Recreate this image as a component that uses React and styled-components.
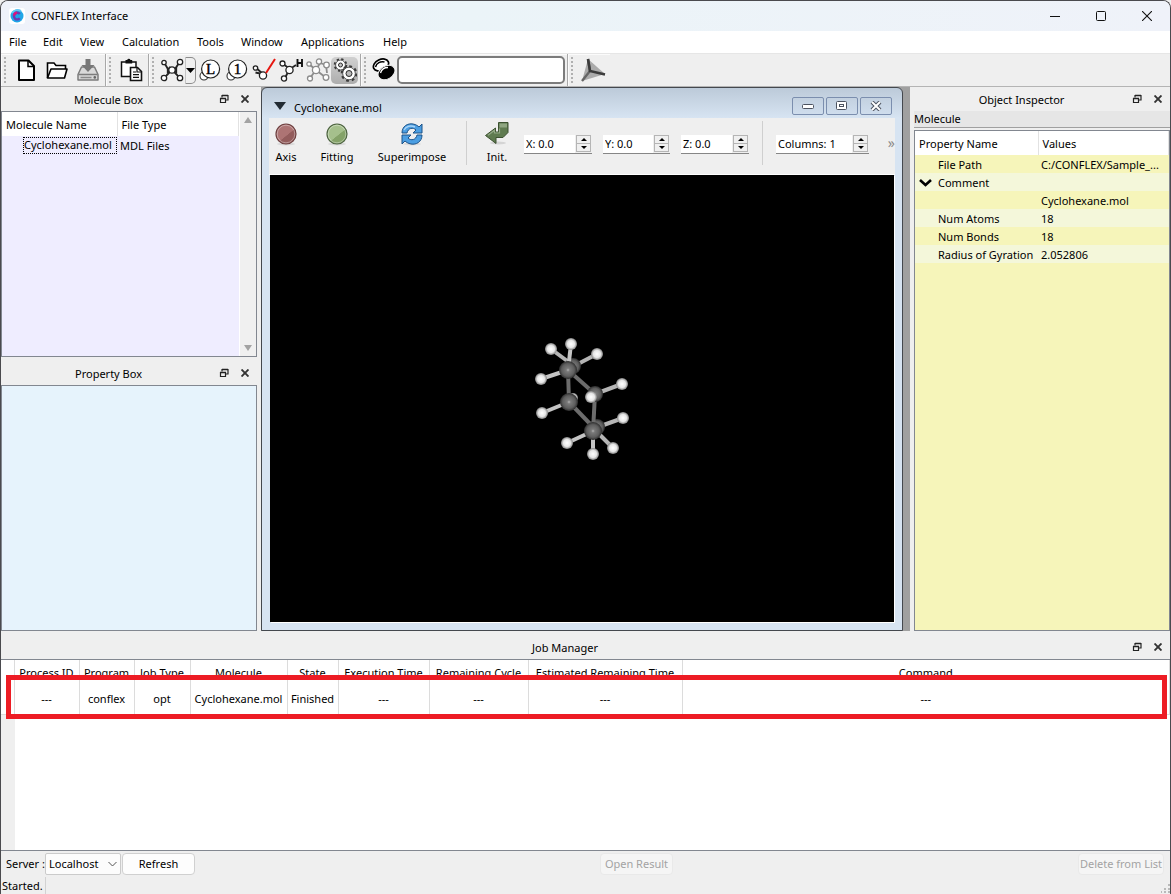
import React from "react";
import styled, { createGlobalStyle } from "styled-components";

const GlobalStyle = createGlobalStyle`
  *, *::before, *::after { box-sizing: border-box; }
  body {
    margin: 0;
    background: #efefef;
    color: #000;
    font-family: "Noto Sans", "Open Sans", sans-serif;
    font-size: 11px;
    line-height: 16px;
  }
  button, input, select { font: inherit; color: inherit; margin: 0; padding: 0; }
  button { border: 0; background: none; }
  svg { display: block; flex: none; }
  table { border-collapse: collapse; border-spacing: 0; }
  th { font-weight: 400; }
`;

/* ---------- application window ---------- */

const Window = styled.div`
  display: flex;
  flex-direction: column;
  min-height: 100vh;
  background: #efefef;
  border: 1px solid #4a4a4e;
  border-bottom: 0;
  border-radius: 8px 8px 0 0;
  overflow: hidden;
`;

const TitleBar = styled.header`
  display: flex;
  align-items: center;
  height: 30px;
  padding-left: 8px;
  background: linear-gradient(90deg, #eff2fa, #ebf4f8 40%, #eff2f9);
`;

const WindowTitle = styled.h1`
  flex: 1;
  margin: 0 0 0 6px;
  font-size: 11px;
  font-weight: 400;
`;

const CaptionButton = styled.button`
  display: grid;
  place-items: center;
  width: 46px;
  height: 30px;
`;

const MenuBar = styled.nav`
  display: flex;
  align-items: center;
  height: 22px;
  background: #fff;
`;

const MenuItem = styled.button`
  width: ${(p) => p.$width}px;
  height: 22px;
  padding-left: 8px;
  text-align: left;
  white-space: nowrap;
`;

/* ---------- main toolbar ---------- */

const ToolBars = styled.div`
  display: flex;
  height: 34px;
  border-top: 1px solid #e6e6e6;
  border-bottom: 1px solid #b4b4b4;
`;

const ToolGroup = styled.div`
  display: flex;
  align-items: center;
  padding: 0 2px 0 3px;
  border-right: ${(p) => (p.$last ? "0" : "1px solid #a8a8a8")};
  box-shadow: inset 1px 1px #fbfbfb;
`;

const Handle = styled.span`
  width: 3px;
  height: 27px;
  margin-right: 3px;
  background: repeating-linear-gradient(#b0b0b0 0 2px, transparent 2px 4px);
  border-right: 1px solid #efefef;
`;

const ToolButton = styled.button`
  display: grid;
  place-items: center;
  width: ${(p) => (p.$wide ? 31 : 27)}px;
  height: 27px;
  border-radius: 5px;
  background: ${(p) => (p.$pressed ? "linear-gradient(#d0d0d0, #adadad)" : "none")};
`;

const DropButton = styled.button`
  display: grid;
  place-items: center;
  width: 11px;
  height: 27px;
  border: 1px solid #8c8c8c;
  border-left-color: #c4c4c4;
  border-radius: 0 5px 5px 0;
`;

const SearchBox = styled.input`
  width: 168px;
  height: 28px;
  padding: 0 6px;
  border: 2px solid #7c7c7c;
  border-radius: 5px;
  background: #fff;
`;

/* ---------- docks ---------- */

const Workspace = styled.main`
  display: grid;
  grid-template-columns: 256px minmax(0, 1fr) 256px;
  column-gap: 4px;
  flex: 1;
  min-height: 544px;
`;

const Dock = styled.section`
  display: flex;
  flex-direction: column;
  min-width: 0;
  flex: ${(p) => (p.$grow ? 1 : "none")};
`;

const DockColumn = styled.div`
  display: flex;
  flex-direction: column;
  gap: 4px;
  min-width: 0;
`;

const DockHeader = styled.div`
  display: flex;
  align-items: center;
  gap: 5px;
  height: 24px;
  padding-right: 4px;
`;

const DockTitle = styled.h2`
  flex: 1;
  margin: 0 -5px 0 0;
  padding-top: 2px;
  font-size: 11px;
  font-weight: 400;
  text-align: center;
`;

const DockButton = styled.button`
  display: grid;
  place-items: center;
  width: 16px;
  height: 16px;
`;

const Frame = styled.div`
  display: flex;
  flex: 1;
  min-height: 0;
  border: 1px solid #828790;
  background: ${(p) => p.$color};
`;

const Tree = styled.table`
  width: 100%;
  table-layout: fixed;
  align-self: flex-start;
  white-space: nowrap;
`;

const TreeHead = styled.th`
  width: ${(p) => (p.$width ? p.$width + "px" : "auto")};
  height: 24px;
  padding: 2px 0 0 4px;
  text-align: left;
  background: #fff;
  border-right: 1px solid #e2e2e2;
`;

const TreeCell = styled.td`
  height: 18px;
  padding: 1px 0 0 ${(p) => p.$indent || 3}px;
  overflow: hidden;
  text-overflow: ellipsis;
`;

const FocusedName = styled.span`
  display: block;
  height: 17px;
  padding-left: 1px;
  outline: 1px dotted #000;
  outline-offset: -1px;
`;

const ScrollBar = styled.div`
  display: flex;
  flex: none;
  flex-direction: column;
  justify-content: space-between;
  align-items: center;
  width: 17px;
  padding: 5px 0;
  background: #f0f0f0;
  border-left: 1px solid #fff;
`;

const InspectorKind = styled.div`
  height: 17px;
  margin-bottom: 2px;
  background: #e6e6e6;
  border-bottom: 1px solid #a0a0a0;
`;

const InspectorRow = styled.tr`
  background: ${(p) => (p.$alt ? "#f4f7da" : "#f6f5ba")};
`;

const NameWithArrow = styled.span`
  display: flex;
  align-items: center;
  gap: 6px;
`;

/* ---------- molecule window ---------- */

const MdiArea = styled.div`
  display: flex;
  padding-right: 7px;
  background: #a0a0a0;
`;

const MdiWindow = styled.section`
  display: flex;
  flex: 1;
  flex-direction: column;
  min-width: 0;
  padding: 0 7px 8px;
  border: 1px solid #44484e;
  border-radius: 6px 6px 0 0;
  background: linear-gradient(#bccad9, #d7e4f2 30px);
`;

const MdiTitleBar = styled.div`
  display: flex;
  align-items: center;
  gap: 2px;
  height: 30px;
  padding: 5px 3px 0 5px;
`;

const MdiTitle = styled.h2`
  flex: 1;
  margin: 4px 0 0 6px;
  font-size: 11px;
  font-weight: 400;
`;

const MdiButton = styled.button`
  display: grid;
  place-items: center;
  width: 32px;
  height: 18px;
  border: 1px solid #7b8eae;
  border-radius: 2px;
  background: linear-gradient(#c3d1e0, #cfdded);
`;

const ViewTools = styled.div`
  display: flex;
  align-items: center;
  height: 57px;
  background: #efefef;
  border-bottom: 1px solid #fff;
`;

const ViewButton = styled.button`
  display: flex;
  flex-direction: column;
  align-items: center;
  gap: 3px;
  width: ${(p) => p.$width}px;
  height: 44px;
  margin-bottom: 4px;
`;

const Divider = styled.span`
  width: 1px;
  height: 44px;
  margin: 0 ${(p) => p.$space}px 6px;
  background: #cfcfcf;
`;

const Spins = styled.div`
  display: flex;
  gap: 11px;
  margin-left: ${(p) => p.$space || 0}px;
  margin-bottom: 4px;
`;

const SpinBox = styled.label`
  display: flex;
  align-items: center;
  width: ${(p) => p.$width}px;
  height: 19px;
  padding-right: 1px;
  background: linear-gradient(90deg, #fff, #fff) no-repeat left / calc(100% - 17px) 100%;
  border-bottom: 1px solid #868686;
`;

const SpinInput = styled.input`
  flex: 1;
  min-width: 0;
  height: 18px;
  padding-left: 2px;
  border: 0;
  background: none;
  outline: 0;
`;

const SpinArrows = styled.span`
  display: flex;
  flex-direction: column;
  width: 15px;
  height: 17px;
  border: 1px solid #b5b5b5;
  background: #f0f0f0;
`;

const SpinArrow = styled.button`
  display: grid;
  place-items: center;
  flex: 1;
  & + & { border-top: 1px solid #b5b5b5; }
`;

const Overflow = styled.button`
  margin: 0 0 6px auto;
  color: #8a8a8a;
  font-size: 14px;
`;

const Canvas = styled.div`
  display: grid;
  place-items: center;
  flex: 1;
  min-height: 200px;
  margin: 0 1px 0;
  background: #000;
  box-shadow: 1px 1px #fff;
`;

/* ---------- job manager ---------- */

const JobHeader = styled(DockHeader)`
  height: 28px;
  padding-top: 4px;
`;

const JobFrame = styled.div`
  position: relative;
  display: flex;
  flex-direction: column;
  height: 192px;
  border-top: 1px solid #828790;
  border-bottom: 1px solid #828790;
`;

const JobTable = styled.table`
  width: 100%;
  table-layout: fixed;
  background: #fff;
  white-space: nowrap;
  text-align: center;
  th, td { padding: 0; border-right: 1px solid #dcdcdc; }
  thead th { height: 25px; padding-top: 1px; }
  tbody td, tbody th { height: 29px; border-bottom: 1px solid #dcdcdc; }
`;

const JobColumn = styled.col`
  width: ${(p) => (p.$width ? p.$width + "px" : "auto")};
`;

const JobEmpty = styled.div`
  flex: 1;
  background: #fff;
  border-left: 14px solid #efefef;
`;

const Highlight = styled.div`
  position: absolute;
  top: 15px;
  left: 5px;
  right: 3px;
  height: 44px;
  border: 5px solid #ed1c24;
  pointer-events: none;
`;

const JobActions = styled.div`
  display: flex;
  justify-content: space-between;
  align-items: center;
  height: 26px;
  padding: 0 6px 0 5px;
`;

const ServerGroup = styled.div`
  display: flex;
  align-items: center;
`;

const ServerLabel = styled.label`
  width: 39px;
  white-space: nowrap;
`;

const SelectWrap = styled.span`
  display: grid;
  align-items: center;
  width: 76px;
  margin-right: 1px;
  > * { grid-area: 1 / 1; }
  > svg { justify-self: end; margin-right: 4px; pointer-events: none; }
`;

const ServerSelect = styled.select`
  appearance: none;
  width: 100%;
  height: 22px;
  padding-left: 3px;
  border: 1px solid #cbcbcb;
  border-radius: 2px;
  background: #fcfcfc;
`;

const PushButton = styled.button`
  min-width: 73px;
  height: 22px;
  padding: 0 1px;
  border: 1px solid #d0d0d0;
  border-radius: 4px;
  background: #fdfdfd;
  white-space: nowrap;
  &:disabled {
    color: #a3a3a3;
    background: #f5f5f5;
    border-color: #e9e9e9;
  }
`;

const StatusBar = styled.footer`
  display: flex;
  justify-content: space-between;
  align-items: flex-end;
  height: 17px;
`;

const StatusText = styled.span`
  width: 45px;
  height: 17px;
  padding: 1px 0 0 1px;
  border-right: 1px solid #d2d2d2;
`;

/* ---------- icons ---------- */

const Svg = ({ w = 24, h = w, box, children }) => (
  <svg width={w} height={h} viewBox={box || `0 0 ${w} ${h}`} fill="none" aria-hidden="true">
    {children}
  </svg>
);

const AppLogo = () => (
  <Svg w={16}>
    <rect width="16" height="16" rx="3" fill="#fff" />
    <circle cx="8" cy="8" r="6.5" fill="#1fa6e8" />
    <path d="M3 5a6.500 6.500 0 0 1 9-2" stroke="#62c6f4" strokeWidth="2" />
    <path d="M10.800 6A3.300 3.300 0 1 0 10.800 10.200" stroke="#6a3bb4" strokeWidth="2.400" />
    <path d="M5 7.500A3.300 3.300 0 0 1 8 4.800" stroke="#e0127c" strokeWidth="2.400" />
  </Svg>
);

const Atoms = ({ bonds, atoms, color = "#222" }) => (
  <>
    {bonds.map((d, i) => <path key={i} d={d} stroke={color} strokeWidth="1.800" />)}
    {atoms.map(([x, y, r], i) => (
      <circle key={i} cx={x} cy={y} r={r} fill="#fff" stroke={color} strokeWidth="1.300" />
    ))}
  </>
);

const icons = {
  newFile: (
    <Svg w={24}>
      <path d="M5 2.500h9.500L20 8v14H5z" fill="#fff" stroke="#000" strokeWidth="2" strokeLinejoin="round" />
      <path d="M14 3v5.500h6" stroke="#000" strokeWidth="1.500" />
    </Svg>
  ),
  open: (
    <Svg w={24}>
      <path d="M2.500 20V5H9l2 2.500h9.500V11" fill="#fff" stroke="#000" strokeWidth="1.600" />
      <path d="M2.500 20l3.500-9h16l-2.500 9z" fill="#fff" stroke="#000" strokeWidth="1.600" strokeLinejoin="round" />
    </Svg>
  ),
  save: (
    <Svg w={24}>
      <path d="M5.500 9h13L22 16.500V22H2v-5.500z" fill="#d9d9d9" stroke="#7c7c7c" strokeWidth="1.500" strokeLinejoin="round" />
      <path d="M2.500 16.500h19" stroke="#7c7c7c" strokeWidth="1.300" />
      <path d="M9.500 1h5v6h4L12 14 5.500 7h4z" fill="#777" />
      <path d="M4.500 19.500h11" stroke="#8a8a8a" strokeWidth="1.600" />
      <circle cx="18.800" cy="19.400" r="1.300" fill="#666" />
    </Svg>
  ),
  paste: (
    <Svg w={24}>
      <path d="M11 18.500H2.500V4H17v5" fill="#fff" stroke="#111" strokeWidth="1.500" />
      <path d="M6.500 2h1.700a1.700 1.700 0 0 1 3.300 0h1.700v3.500H6.500z" fill="#111" />
      <path d="M11.500 9.500h7l4 4v9h-11z" fill="#fff" stroke="#111" strokeWidth="1.600" />
      <path d="M18 10v4h4M14 14h3M14 16.700h6M14 19.300h6" stroke="#111" strokeWidth="1.200" />
    </Svg>
  ),
  molecule: (
    <Svg w={24}>
      <Atoms
        bonds={["M4 4.500l4 6.500h7l4-6", "M8 11l1 4-5 5", "M15 11l0 4 5 5", "M9 9l6 5"]}
        atoms={[[4, 4.500, 2.200], [20, 4, 2.700], [4, 20, 2.700], [20, 20, 2.700], [12, 12, 3.200]]}
      />
      <path d="M7.500 9v6.500M16.500 9v6.500" stroke="#222" strokeWidth="1.300" />
    </Svg>
  ),
  badge: (text) => (
    <Svg w={24}>
      <circle cx="6" cy="18" r="4" fill="#fff" stroke="#333" strokeWidth="1.100" />
      <circle cx="12.600" cy="11" r="9" fill="#fff" stroke="#222" strokeWidth="1.200" />
      <text x="12.600" y="16" textAnchor="middle" fontFamily="Liberation Serif, serif" fontSize="15" fill="#000" stroke="#000" strokeWidth="0.400">{text}</text>
    </Svg>
  ),
  redBond: (
    <Svg w={24}>
      <Atoms bonds={["M3 9l8 7"]} atoms={[[3.500, 10, 2.200], [11, 17.500, 3.600]]} />
      <path d="M3.500 14.500l4.500 1" stroke="#222" strokeWidth="2" />
      <path d="M14 15l9-14" stroke="#e61610" strokeWidth="2" />
    </Svg>
  ),
  addH: (
    <Svg w={24}>
      <Atoms
        bonds={["M4 6l7 5 6-4", "M10 12l-4 8"]}
        atoms={[[3.500, 5.500, 2.500], [5, 20.500, 2.600], [10.500, 12, 3.600]]}
      />
      <path d="M18.500 1v8M23 1v8M18.500 5H23" stroke="#111" strokeWidth="1.900" />
    </Svg>
  ),
  greyMolecule: (
    <Svg w={24}>
      <Atoms
        color="#8c8c8c"
        bonds={["M3 6l7 6 4-7 6 2", "M10 12l-6 8M10 12l9 7M20 7l1 8"]}
        atoms={[[3, 6, 2.200], [13, 3.500, 2.600], [20.500, 7, 2.800], [4, 20.500, 2.500], [20, 19.500, 2.800], [10, 12, 3.600]]}
      />
    </Svg>
  ),
  gears: (
    <Svg w={24}>
      <circle cx="7.500" cy="7" r="5.600" stroke="#3b3b3b" strokeWidth="2.400" strokeDasharray="2.200 2.200" />
      <circle cx="7.500" cy="7" r="4.900" fill="#fff" stroke="#3b3b3b" strokeWidth="0.800" />
      <circle cx="7.500" cy="7" r="2" fill="#c4c4c4" stroke="#2b2b2b" />
      <circle cx="16" cy="15.500" r="7" stroke="#3b3b3b" strokeWidth="2.600" strokeDasharray="2.750 2.750" />
      <circle cx="16" cy="15.500" r="6.300" fill="#fff" stroke="#3b3b3b" strokeWidth="0.800" />
      <circle cx="16" cy="15.500" r="3" fill="#b8b8b8" stroke="#2b2b2b" />
    </Svg>
  ),
  beans: (
    <Svg w={24}>
      <ellipse cx="9" cy="7" rx="8" ry="5.500" transform="rotate(-25 9 7)" fill="#fff" stroke="#000" strokeWidth="1.700" />
      <path d="M3.500 9c1-4 5-6 9-5" stroke="#000" strokeWidth="1.500" />
      <ellipse cx="14.500" cy="14.500" rx="9" ry="6.500" transform="rotate(-30 14.500 14.500)" fill="#000" stroke="#efefef" />
      <path d="M8.500 15c1-3.500 4-5.500 7.500-5.500" stroke="#fff" strokeWidth="1.300" />
    </Svg>
  ),
  axes: (
    <Svg w={26}>
      <path d="M8 2L2 24 25 17z" fill="#ababab" />
      <path d="M8 2l2 12L2 24" stroke="#666" strokeWidth="2.400" />
      <path d="M8 2l2 12 15 3.500" stroke="#3c3c3c" strokeWidth="2.600" />
    </Svg>
  ),
};

const Triangle = ({ w, h, up, color = "#000" }) => (
  <Svg w={w} h={h}>
    <path d={up ? `M0 ${h}L${w / 2} 0L${w} ${h}z` : `M0 0h${w}L${w / 2} ${h}z`} fill={color} />
  </Svg>
);

const Disc = ({ id, light, dark, edge }) => (
  <Svg w={24}>
    <defs>
      <linearGradient id={id} x1="0" y1="0" x2="0.800" y2="1">
        <stop offset="0" stopColor={light} />
        <stop offset="0.600" stopColor={light} />
        <stop offset="0.620" stopColor={dark} />
      </linearGradient>
    </defs>
    <ellipse cx="12" cy="22" rx="9" ry="1.500" fill="#d9d9d9" />
    <circle cx="12" cy="12" r="10" fill={`url(#${id})`} stroke={edge} strokeWidth="1.200" />
    <circle cx="12" cy="12" r="8.800" stroke="#fff" strokeOpacity="0.350" />
  </Svg>
);

const Superimpose = () => (
  <Svg w={24}>
    <ellipse cx="12" cy="22" rx="9" ry="1.500" fill="#dcdcdc" />
    <path d="M2 11C2 4 8 1 13 2c3 .500 5 2 6 3l3-3v9h-9l3-3c-3-3-8-2-9 3z" fill="#4b9ee2" stroke="#1d5388" strokeLinejoin="round" />
    <path d="M22 13c0 7-6 10-11 9-3-.500-5-2-6-3l-3 3v-9h9l-3 3c3 3 8 2 9-3z" fill="#4b9ee2" stroke="#1d5388" strokeLinejoin="round" />
    <path d="M4 8c2-4 7-5 11-3" stroke="#a8d4f7" strokeWidth="1.400" />
  </Svg>
);

const InitArrow = () => (
  <Svg w={24}>
    <ellipse cx="13" cy="21" rx="8" ry="1.500" fill="#d4d4d4" />
    <path d="M13.500 0.500h9.500v10l-5 5h-7v6L0.500 13.500l10-7.500v4h3z" fill="#5f7b50" stroke="#3c5130" strokeLinejoin="round" />
    <path d="M14.500 1.500h7.500v4h-7.500z" fill="#8fa681" />
    <path d="M3 13.200l6.500-5V11h5V6.500" stroke="#93a986" strokeWidth="1.200" />
  </Svg>
);

const FloatIcon = () => (
  <Svg w={10}>
    <path d="M3 3.500V1.500h6v4.500H7" stroke="#222" strokeWidth="1.200" />
    <path d="M3 1.500h6M1 4.500h6" stroke="#222" strokeWidth="1.600" />
    <path d="M1.500 4v4.500h5V4" stroke="#222" strokeWidth="1.200" />
  </Svg>
);

const CloseIcon = () => (
  <Svg w={8}>
    <path d="M0.500 0.500l7 7M7.500 0.500l-7 7" stroke="#333" strokeWidth="1.900" />
  </Svg>
);

const darkBonds = [[48, 45, 49, 77], [48, 45, 75, 69], [49, 77, 75, 104], [75, 69, 73, 106]];
const rearBonds = [[54, 41, 31, 24], [54, 41, 77, 29], [75, 69, 102, 59], [78, 102, 103, 93], [76, 106, 93, 123]];
const frontBonds = [[48, 45, 51, 19], [48, 45, 21, 54], [49, 77, 22, 88], [73, 106, 47, 118], [73, 106, 73, 129]];
const hydrogens = [
  [31, 24], [51, 19], [77, 29], [21, 54], [102, 59],
  [22, 88], [103, 93], [47, 118], [73, 129], [93, 123],
];

const Bond = ({ at: [x1, y1, x2, y2], color }) => (
  <line x1={x1} y1={y1} x2={x2} y2={y2} stroke={color} strokeWidth="4" />
);

const Cyclohexane = () => (
  <svg width="130" height="145" viewBox="-3 1 130 145" role="img" aria-label="Cyclohexane model">
    <defs>
      <radialGradient id="carbon">
        <stop offset="0" stopColor="#b4b4b4" />
        <stop offset="0.200" stopColor="#7a7a7a" />
        <stop offset="0.700" stopColor="#5e5e5e" />
        <stop offset="1" stopColor="#2c2c2c" />
      </radialGradient>
      <radialGradient id="hydrogen">
        <stop offset="0" stopColor="#fff" />
        <stop offset="0.600" stopColor="#e6e6e6" />
        <stop offset="1" stopColor="#808080" />
      </radialGradient>
    </defs>
    {rearBonds.map((b) => <Bond key={b.join()} at={b} color="#b5b5b5" />)}
    <circle cx="53" cy="73" r="5" fill="url(#hydrogen)" />
    <circle cx="53" cy="41" r="8" fill="url(#carbon)" />
    <circle cx="77" cy="102" r="8" fill="url(#carbon)" />
    {darkBonds.map((b) => <Bond key={b.join()} at={b} color="#6c6c6c" />)}
    <circle cx="75" cy="69" r="8" fill="url(#carbon)" />
    {frontBonds.map((b) => <Bond key={b.join()} at={b} color="#c4c4c4" />)}
    <circle cx="48" cy="45" r="9" fill="url(#carbon)" />
    <circle cx="49" cy="77" r="9" fill="url(#carbon)" />
    <circle cx="73" cy="106" r="9" fill="url(#carbon)" />
    {hydrogens.map(([x, y]) => <circle key={`${x}-${y}`} cx={x} cy={y} r="6" fill="url(#hydrogen)" />)}
    <circle cx="71" cy="72" r="6" fill="url(#hydrogen)" />
  </svg>
);

/* ---------- composed parts ---------- */

const menus = [
  ["File", 34], ["Edit", 37], ["View", 42], ["Calculation", 75],
  ["Tools", 44], ["Window", 60], ["Applications", 82], ["Help", 42],
];

const DockTop = ({ title, as: Header = DockHeader }) => (
  <Header>
    <DockTitle>{title}</DockTitle>
    <DockButton aria-label={`Float ${title}`}><FloatIcon /></DockButton>
    <DockButton aria-label={`Close ${title}`}><CloseIcon /></DockButton>
  </Header>
);

const Spin = ({ name, value, width }) => (
  <SpinBox $width={width}>
    <SpinInput aria-label={name} defaultValue={value} />
    <SpinArrows>
      <SpinArrow aria-label={`Increase ${name}`}><Triangle w={6} h={3} up /></SpinArrow>
      <SpinArrow aria-label={`Decrease ${name}`}><Triangle w={6} h={3} /></SpinArrow>
    </SpinArrows>
  </SpinBox>
);

const properties = [
  ["File Path", "C:/CONFLEX/Sample_..."],
  ["Comment", "", true],
  ["", "Cyclohexane.mol"],
  ["Num Atoms", "18"],
  ["Num Bonds", "18"],
  ["Radius of Gyration", "2.052806"],
];

const jobColumns = [
  ["Process ID", 65, "---"],
  ["Program", 55, "conflex"],
  ["Job Type", 56, "opt"],
  ["Molecule", 97, "Cyclohexane.mol"],
  ["State", 51, "Finished"],
  ["Execution Time", 91, "---"],
  ["Remaining Cycle", 99, "---"],
  ["Estimated Remaining Time", 154, "---"],
  ["Command", null, "---"],
];

export default function App() {
  return (
    <>
      <GlobalStyle />
      <Window>
        <TitleBar>
          <AppLogo />
          <WindowTitle>CONFLEX Interface</WindowTitle>
          <CaptionButton aria-label="Minimize"><Svg w={10}><path d="M0 5.500h10" stroke="#111" /></Svg></CaptionButton>
          <CaptionButton aria-label="Maximize"><Svg w={10}><rect x="0.500" y="0.500" width="9" height="9" rx="1" stroke="#111" /></Svg></CaptionButton>
          <CaptionButton aria-label="Close"><Svg w={10}><path d="M0 0l10 10M10 0L0 10" stroke="#111" strokeWidth="1.100" /></Svg></CaptionButton>
        </TitleBar>

        <MenuBar>
          {menus.map(([name, width]) => <MenuItem key={name} $width={width}>{name}</MenuItem>)}
        </MenuBar>

        <ToolBars>
          <ToolGroup>
            <Handle />
            <ToolButton $wide aria-label="New">{icons.newFile}</ToolButton>
            <ToolButton $wide aria-label="Open">{icons.open}</ToolButton>
            <ToolButton $wide aria-label="Save">{icons.save}</ToolButton>
          </ToolGroup>
          <ToolGroup>
            <Handle />
            <ToolButton $wide aria-label="Paste">{icons.paste}</ToolButton>
          </ToolGroup>
          <ToolGroup>
            <Handle />
            <ToolButton aria-label="Build molecule">{icons.molecule}</ToolButton>
            <DropButton aria-label="Molecule options"><Triangle w={9} h={5} /></DropButton>
            <ToolButton aria-label="Label">{icons.badge("L")}</ToolButton>
            <ToolButton aria-label="Number">{icons.badge("1")}</ToolButton>
            <ToolButton aria-label="Bond">{icons.redBond}</ToolButton>
            <ToolButton aria-label="Hydrogens">{icons.addH}</ToolButton>
            <ToolButton aria-label="Fragments">{icons.greyMolecule}</ToolButton>
            <ToolButton $pressed aria-label="Jobs">{icons.gears}</ToolButton>
          </ToolGroup>
          <ToolGroup>
            <Handle />
            <ToolButton aria-label="Find">{icons.beans}</ToolButton>
            <SearchBox aria-label="Search" />
          </ToolGroup>
          <ToolGroup $last>
            <Handle />
            <ToolButton $wide aria-label="Axes">{icons.axes}</ToolButton>
          </ToolGroup>
        </ToolBars>

        <Workspace>
          <DockColumn>
            <Dock $grow>
              <DockTop title="Molecule Box" />
              <Frame $color="#efedff">
                <Tree>
                  <thead>
                    <tr><TreeHead $width={115}>Molecule Name</TreeHead><TreeHead>File Type</TreeHead></tr>
                  </thead>
                  <tbody>
                    <tr>
                      <TreeCell $indent={21}><FocusedName>Cyclohexane.mol</FocusedName></TreeCell>
                      <TreeCell>MDL Files</TreeCell>
                    </tr>
                  </tbody>
                </Tree>
                <ScrollBar>
                  <Triangle w={8} h={6} up color="#a3a3a3" />
                  <Triangle w={8} h={6} color="#a3a3a3" />
                </ScrollBar>
              </Frame>
            </Dock>
            <Dock $grow>
              <DockTop title="Property Box" />
              <Frame $color="#e6f3fc" />
            </Dock>
          </DockColumn>

          <MdiArea>
            <MdiWindow>
              <MdiTitleBar>
                <Triangle w={12} h={8} color="#222b33" />
                <MdiTitle>Cyclohexane.mol</MdiTitle>
                <MdiButton aria-label="Minimize view">
                  <Svg w={12} h={6}><rect x="0.500" y="1.500" width="11" height="4" rx="1" fill="#fff" stroke="#4c5360" /></Svg>
                </MdiButton>
                <MdiButton aria-label="Maximize view">
                  <Svg w={12} h={10}><rect x="0.500" y="0.500" width="10" height="8" rx="1" fill="#fff" stroke="#4c5360" /><rect x="3.500" y="3.500" width="4" height="2" stroke="#4c5360" /></Svg>
                </MdiButton>
                <MdiButton aria-label="Close view">
                  <Svg w={12} h={10}><path d="M2 1l8 8M10 1L2 9" stroke="#4c5360" strokeWidth="4" /><path d="M2 1l8 8M10 1L2 9" stroke="#fff" strokeWidth="2" /></Svg>
                </MdiButton>
              </MdiTitleBar>
              <ViewTools>
                <ViewButton $width={34}><Disc id="axisDisc" light="#ad7474" dark="#935c5c" edge="#6e4040" />Axis</ViewButton>
                <ViewButton $width={68}><Disc id="fitDisc" light="#a5c08c" dark="#84a268" edge="#4d6340" />Fitting</ViewButton>
                <ViewButton $width={82}><Superimpose />Superimpose</ViewButton>
                <Divider $space={13} />
                <ViewButton $width={34}><InitArrow />Init.</ViewButton>
                <Spins $space={10}>
                  <Spin name="X" value="X: 0.0" width={68} />
                  <Spin name="Y" value="Y: 0.0" width={67} />
                  <Spin name="Z" value="Z: 0.0" width={68} />
                </Spins>
                <Divider $space={13} />
                <Spins>
                  <Spin name="Columns" value="Columns: 1" width={93} />
                </Spins>
                <Overflow aria-label="More tools">»</Overflow>
              </ViewTools>
              <Canvas><Cyclohexane /></Canvas>
            </MdiWindow>
          </MdiArea>

          <Dock>
            <DockTop title="Object Inspector" />
            <InspectorKind>Molecule</InspectorKind>
            <Frame $color="#f6f5ba">
              <Tree>
                <thead>
                  <tr><TreeHead $width={123}>Property Name</TreeHead><TreeHead>Values</TreeHead></tr>
                </thead>
                <tbody>
                  {properties.map(([name, value, open], i) => (
                    <InspectorRow key={i} $alt={i % 2 === 1}>
                      <TreeCell $indent={open ? 4 : 23}>
                        {open ? (
                          <NameWithArrow>
                            <Svg w={13} h={9}><path d="M1 2l5.500 5L12 2" stroke="#000" strokeWidth="2.600" /></Svg>
                            {name}
                          </NameWithArrow>
                        ) : name}
                      </TreeCell>
                      <TreeCell>{value}</TreeCell>
                    </InspectorRow>
                  ))}
                </tbody>
              </Tree>
            </Frame>
          </Dock>
        </Workspace>

        <Dock>
          <DockTop title="Job Manager" as={JobHeader} />
          <JobFrame>
            <JobTable>
              <colgroup>
                <JobColumn $width={13} />
                {jobColumns.map(([name, width]) => <JobColumn key={name} $width={width} />)}
              </colgroup>
              <thead>
                <tr>
                  <th aria-label="Row" />
                  {jobColumns.map(([name]) => <th key={name} scope="col">{name}</th>)}
                </tr>
              </thead>
              <tbody>
                <tr>
                  <th aria-label="Job" />
                  {jobColumns.map(([name, , value]) => <td key={name}>{value}</td>)}
                </tr>
              </tbody>
            </JobTable>
            <JobEmpty />
            <Highlight />
          </JobFrame>
          <JobActions>
            <ServerGroup>
              <ServerLabel htmlFor="server">Server :</ServerLabel>
              <SelectWrap>
                <ServerSelect id="server"><option>Localhost</option></ServerSelect>
                <Svg w={9} h={6}><path d="M0.500 1l4 4 4-4" stroke="#555" /></Svg>
              </SelectWrap>
              <PushButton>Refresh</PushButton>
            </ServerGroup>
            <PushButton disabled>Open Result</PushButton>
            <PushButton disabled>Delete from List</PushButton>
          </JobActions>
        </Dock>

        <StatusBar>
          <StatusText>Started.</StatusText>
          <Svg w={10}><path d="M8 1h2M8 5h2M8 8h2M4 5h2M4 8h2M1 8h1" stroke="#b9b9b9" strokeWidth="2" /></Svg>
        </StatusBar>
      </Window>
    </>
  );
}
